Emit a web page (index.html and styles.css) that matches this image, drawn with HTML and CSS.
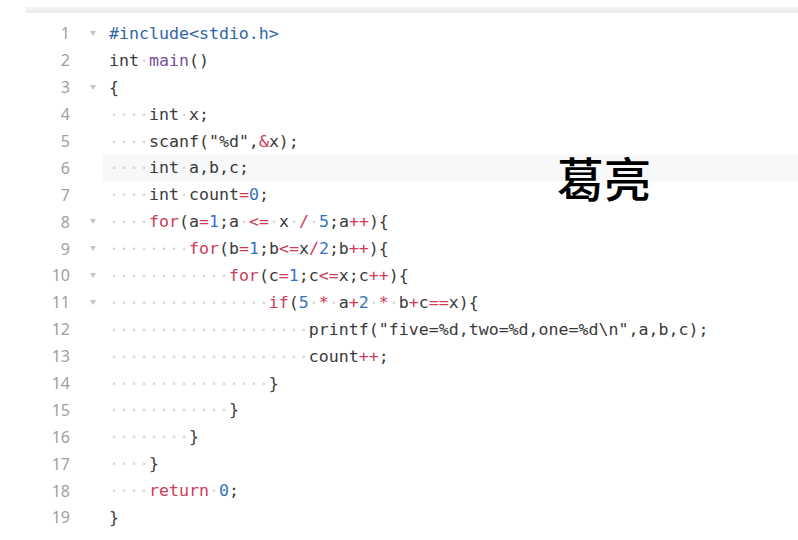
FILE: index.html
```html
<!DOCTYPE html>
<html>
<head>
<meta charset="utf-8">
<link rel="stylesheet" href="styles.css">
</head>
<body>
<div class="topbar"></div>
<div class="editor">
  <div class="row"><span class="ln">1</span><span class="fold"><i class="tri"></i></span><span class="code"><span class="pp">#include&lt;stdio.h&gt;</span></span></div>
  <div class="row"><span class="ln">2</span><span class="fold"></span><span class="code">int<span class="ws">·</span><span class="fn">main</span>()</span></div>
  <div class="row"><span class="ln">3</span><span class="fold"><i class="tri"></i></span><span class="code">{</span></div>
  <div class="row"><span class="ln">4</span><span class="fold"></span><span class="code"><span class="ws">····</span>int<span class="ws">·</span>x;</span></div>
  <div class="row"><span class="ln">5</span><span class="fold"></span><span class="code"><span class="ws">····</span>scanf("%d",<span class="op">&amp;</span>x);</span></div>
  <div class="row active"><span class="ln">6</span><span class="fold"></span><span class="code"><span class="ws">····</span>int<span class="ws">·</span>a,b,c;</span></div>
  <div class="row"><span class="ln">7</span><span class="fold"></span><span class="code"><span class="ws">····</span>int<span class="ws">·</span>count<span class="op">=</span><span class="num">0</span>;</span></div>
  <div class="row"><span class="ln">8</span><span class="fold"><i class="tri"></i></span><span class="code"><span class="ws">····</span><span class="kw">for</span>(a<span class="op">=</span><span class="num">1</span>;a<span class="ws">·</span><span class="op">&lt;=</span><span class="ws">·</span>x<span class="ws">·</span><span class="op">/</span><span class="ws">·</span><span class="num">5</span>;a<span class="op">++</span>){</span></div>
  <div class="row"><span class="ln">9</span><span class="fold"><i class="tri"></i></span><span class="code"><span class="ws">········</span><span class="kw">for</span>(b<span class="op">=</span><span class="num">1</span>;b<span class="op">&lt;=</span>x<span class="op">/</span><span class="num">2</span>;b<span class="op">++</span>){</span></div>
  <div class="row"><span class="ln">10</span><span class="fold"><i class="tri"></i></span><span class="code"><span class="ws">············</span><span class="kw">for</span>(c<span class="op">=</span><span class="num">1</span>;c<span class="op">&lt;=</span>x;c<span class="op">++</span>){</span></div>
  <div class="row"><span class="ln">11</span><span class="fold"><i class="tri"></i></span><span class="code"><span class="ws">················</span><span class="kw">if</span>(<span class="num">5</span><span class="ws">·</span><span class="op">*</span><span class="ws">·</span>a<span class="op">+</span><span class="num">2</span><span class="ws">·</span><span class="op">*</span><span class="ws">·</span>b<span class="op">+</span>c<span class="op">==</span>x){</span></div>
  <div class="row"><span class="ln">12</span><span class="fold"></span><span class="code"><span class="ws">····················</span>printf("five=%d,two=%d,one=%d\n",a,b,c);</span></div>
  <div class="row"><span class="ln">13</span><span class="fold"></span><span class="code"><span class="ws">····················</span>count<span class="op">++</span>;</span></div>
  <div class="row"><span class="ln">14</span><span class="fold"></span><span class="code"><span class="ws">················</span>}</span></div>
  <div class="row"><span class="ln">15</span><span class="fold"></span><span class="code"><span class="ws">············</span>}</span></div>
  <div class="row"><span class="ln">16</span><span class="fold"></span><span class="code"><span class="ws">········</span>}</span></div>
  <div class="row"><span class="ln">17</span><span class="fold"></span><span class="code"><span class="ws">····</span>}</span></div>
  <div class="row"><span class="ln">18</span><span class="fold"></span><span class="code"><span class="ws">····</span><span class="kw">return</span><span class="ws">·</span><span class="num">0</span>;</span></div>
  <div class="row"><span class="ln">19</span><span class="fold"></span><span class="code">}</span></div>
  <div class="name">葛亮</div>
</div>
</body>
</html>
```

FILE: styles.css
```css
html, body {
  margin: 0;
  padding: 0;
  background: #ffffff;
  width: 798px;
  height: 540px;
  overflow: hidden;
}

.topbar {
  margin-top: 7px;
  margin-left: 26px;
  height: 6px;
  background: linear-gradient(#f4f4f4, #ebebeb);
}

.editor {
  position: relative;
  padding-top: 7px;
}

.row {
  display: flex;
  align-items: center;
  height: 26.9px;
}

.ln {
  width: 70px;
  text-align: right;
  font-family: "Noto Sans", "Open Sans", sans-serif;
  font-size: 16px;
  color: #a0a0a0;
}

.fold {
  width: 33px;
  display: flex;
  justify-content: center;
  padding-left: 12px;
  box-sizing: border-box;
}

.tri {
  display: block;
  width: 0;
  height: 0;
  border-left: 3px solid transparent;
  border-right: 3px solid transparent;
  border-top: 5px solid #c4c4c4;
}

.code {
  flex: 1;
  height: 100%;
  display: flex;
  align-items: center;
  padding-left: 6px;
  font-family: "DejaVu Sans Mono", "Liberation Mono", monospace;
  font-size: 16.6px;
  color: #3a3a3a;
  white-space: pre;
}

.active .code {
  background: #f7f8fa;
}

.ws { color: #d4d4d4; }
.pp { color: #2f66a3; }
.fn { color: #7c4ea3; }
.kw { color: #cf3b56; }
.op { color: #cf3b56; }
.num { color: #3373bf; }

.name {
  position: absolute;
  left: 557px;
  top: 140px;
  font-family: "Noto Sans CJK SC", sans-serif;
  font-size: 47px;
  font-weight: 500;
  color: #000000;
  line-height: 1;
}
```
